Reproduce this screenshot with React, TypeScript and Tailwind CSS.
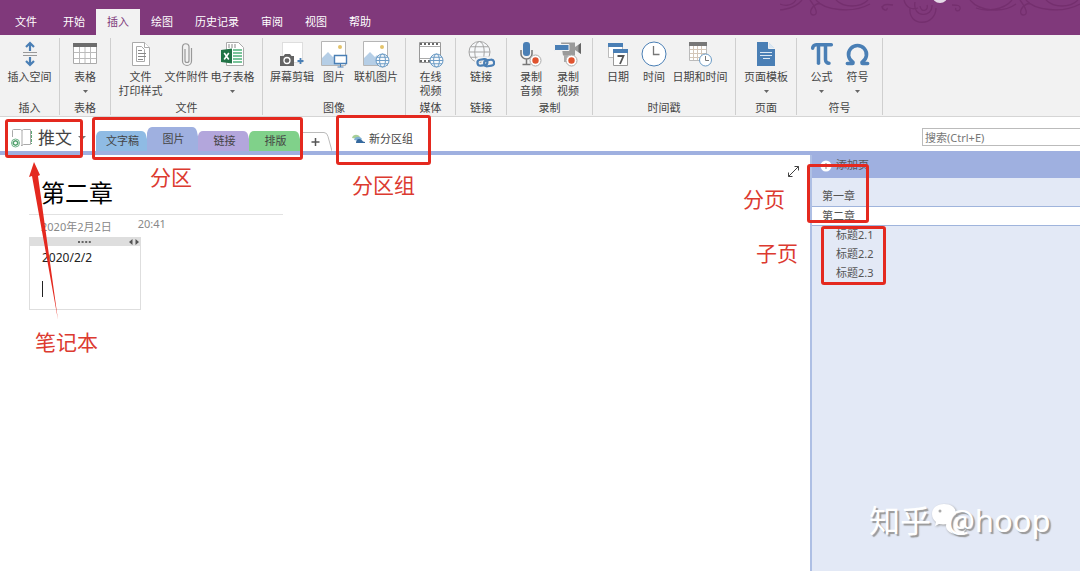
import type { ReactNode } from 'react';
import { Omega, Pi } from 'lucide-react';

const BLUE = '#4a7fb5';

interface ToolProps {
  icon: ReactNode;
  lines: string[];
  menu?: boolean;
  width: string;
}

function Tool({ icon, lines, menu, width }: ToolProps) {
  return (
    <button type="button" className={`flex flex-col items-center shrink-0 whitespace-nowrap ${width}`}>
      <span className="flex h-[32px] items-center justify-center">{icon}</span>
      {lines.map(l => <span key={l} className="h-[14px] leading-[14px]">{l}</span>)}
      {menu && <Caret />}
    </button>
  );
}

function Caret() {
  return (
    <span className="flex h-[14px] items-center justify-center">
      <svg width="5" height="3" viewBox="0 0 5 3"><path d="M0 0h5L2.5 3z" fill="#666" /></svg>
    </span>
  );
}

function Group({ name, width, children }: { name: string; width: string; children: ReactNode }) {
  return (
    <section aria-label={name} className={`flex shrink-0 flex-col justify-between border-r border-[#cfcfcf] ${width}`}>
      <div className="flex justify-center">{children}</div>
      <div className="h-[14px] text-center leading-[14px]">{name}</div>
    </section>
  );
}

function Globe({ x, y, r, color }: { x: number; y: number; r: number; color: string }) {
  return (
    <g fill="#f7f9fb" stroke={color} strokeWidth="1">
      <circle cx={x} cy={y} r={r} />
      <ellipse cx={x} cy={y} rx={r * 0.45} ry={r} fill="none" />
      <path d={`M${x - r} ${y}h${r * 2}M${x - r * 0.85} ${y - r * 0.5}h${r * 1.7}M${x - r * 0.85} ${y + r * 0.5}h${r * 1.7}`} fill="none" />
    </g>
  );
}

function Photo() {
  return (
    <g>
      <path d="M1.5 1.5h24v24h-24z" fill="#fff" stroke="#b5b5b5" />
      <path d="M2 25v-7l6-6 5 5 2-2 5 5v5z" fill="#b5cee6" />
      <circle cx="20" cy="7" r="2" fill="#e3c36b" />
    </g>
  );
}

function Rec({ x, y }: { x: number; y: number }) {
  return (
    <g>
      <circle cx={x} cy={y} r="5.5" fill="#fff" stroke="#aaa" />
      <circle cx={x} cy={y} r="3.2" fill="#e0532f" />
    </g>
  );
}

const icons = {
  space: (
    <svg width="16" height="26" viewBox="0 0 16 26" fill="none">
      <path d="M1 11.5h14M1 14.5h14" stroke="#999" />
      <path d="M8 10V2.5M4 6l4-4 4 4M8 16v7.5M4 20l4 4 4-4" stroke={BLUE} strokeWidth="2.2" />
    </svg>
  ),
  table: (
    <svg width="24" height="24" viewBox="0 0 24 24">
      <path d="M.5 2.5h23v19H.5z" fill="#fff" stroke="#aaa" />
      <path d="M0 1h24v4H0z" fill="#6d6d6d" />
      <path d="M1 10.5h22M1 16.5h22M6.5 5v16M12 5v16M17.5 5v16" stroke="#bbb" />
    </svg>
  ),
  printout: (
    <svg width="20" height="26" viewBox="0 0 20 26" fill="#fff" stroke="#aaa">
      <path d="M1.5 1.5h12l5 5v18h-17z" />
      <path d="M13.5 1.5v5h5" />
      <path d="M5.5 5.5h5l3 3v12h-8z" />
      <path d="M7 9.5h4M7 12.5h8M7 15.5h8M7 18.5h5" stroke="#888" />
    </svg>
  ),
  clip: (
    <svg width="12" height="26" viewBox="0 0 12 26" fill="none" stroke="#999" strokeWidth="1.2">
      <path d="M4 8v11.5a2 2 0 0 0 4 0V5.5a3.3 3.3 0 0 0-6.500 0V20a4.500 4.500 0 0 0 9 0V7" />
    </svg>
  ),
  sheet: (
    <svg width="24" height="26" viewBox="0 0 24 26">
      <path d="M5.5 1.5h12l5 5v18h-17z" fill="#fff" stroke="#aaa" />
      <path d="M7 4h9M7 6h9" stroke="#888" strokeDasharray="2 1" />
      <path d="M12 9h9M12 12h9M12 15h9M12 18h9M12 21h9" stroke="#79c49a" strokeWidth="2" />
      <path d="M0 9l11-1.5v15L0 21z" fill="#217346" />
      <path d="M3.2 12l4.600 6.5M7.800 12l-4.600 6.5" stroke="#fff" strokeWidth="1.6" />
    </svg>
  ),
  capture: (
    <svg width="26" height="26" viewBox="0 0 26 26">
      <path d="M3.5 1.5h20v20h-20z" fill="#fff" stroke="#c4c4c4" strokeDasharray="1 1" />
      <path d="M1 15h3.5l1.5-2h5l1.5 2H15v10H1z" fill="#636363" />
      <circle cx="8" cy="19.5" r="3" fill="#636363" stroke="#fff" strokeWidth="1.3" />
      <path d="M21.5 17v6M18.5 20h6" stroke={BLUE} strokeWidth="1.8" />
    </svg>
  ),
  picture: (
    <svg width="28" height="28" viewBox="0 0 28 28">
      <Photo />
      <path d="M14.5 15.5h12v8h-12z" fill="#fff" stroke={BLUE} strokeWidth="1.4" />
      <path d="M20.5 24v3M17.5 27h6" stroke={BLUE} />
    </svg>
  ),
  online: <svg width="28" height="28" viewBox="0 0 28 28"><Photo /><Globe x={20.5} y={20.5} r={6.5} color="#6c9cc6" /></svg>,
  video: (
    <svg width="26" height="28" viewBox="0 0 26 28">
      <path d="M1.5 2.5h21v20h-21z" fill="#fff" stroke="#999" />
      <path d="M2 4h20M2 21h20" stroke="#666" strokeWidth="2" strokeDasharray="2 2" />
      <path d="M2 6.5h20M2 18.5h20" stroke="#aaa" />
      <Globe x={18.5} y={20.5} r={6.5} color="#6c9cc6" />
    </svg>
  ),
  link: (
    <svg width="28" height="28" viewBox="0 0 28 28">
      <Globe x={12.5} y={12} r={10.5} color="#a5a5a5" />
      <g fill="none" stroke="#f2f2f2" strokeWidth="5">
        <rect x="10" y="19" width="10" height="7" rx="3.5" /><rect x="17" y="19" width="9" height="7" rx="3.5" />
      </g>
      <g fill="none" stroke={BLUE} strokeWidth="2.2">
        <rect x="10.5" y="19.5" width="10" height="6" rx="3" transform="rotate(-8 15 23)" />
        <rect x="17" y="20" width="10" height="6" rx="3" transform="rotate(-8 22 22)" />
      </g>
    </svg>
  ),
  audio: (
    <svg width="22" height="28" viewBox="0 0 22 28">
      <rect x="3" y="2" width="7" height="14" rx="3" fill={BLUE} />
      <path d="M1 10v4a5.5 5 0 0 0 11 0v-4M6.5 19v5M2.5 24.5h8" fill="none" stroke="#777" strokeWidth="1.5" />
      <Rec x={15.5} y={20.5} />
    </svg>
  ),
  camera: (
    <svg width="28" height="28" viewBox="0 0 28 28">
      <path d="M7 2.5h14v13H9zM21 7l6-4v11l-6-4z" fill="#9a9a9a" />
      <path d="M24.5 5l2.5-2v11l-2.5-2z" fill="#666" />
      <path d="M.5 4.5h14.5v6H.5z" fill={BLUE} stroke="#f2f2f2" />
      <path d="M10 15h4v7h-4z" fill="#aaa" />
      <Rec x={17.5} y={20.5} />
    </svg>
  ),
  date: (
    <svg width="22" height="26" viewBox="0 0 22 26">
      <path d="M1.5 2.5h14v14h-14z" fill="#fff" stroke="#bbb" />
      <path d="M1 2h15v4H1z" fill={BLUE} />
      <path d="M6.5 8.5h14v16h-14z" fill="#fff" stroke="#999" />
      <path d="M6 8h15v4H6z" fill={BLUE} />
      <path d="M10.5 15h6l-3.5 8" fill="none" stroke="#555" strokeWidth="1.8" />
    </svg>
  ),
  time: (
    <svg width="26" height="26" viewBox="0 0 26 26" fill="none">
      <circle cx="13" cy="13" r="12" fill="#fff" stroke={BLUE} />
      <path d="M12.5 5v8.5h6" stroke="#777" strokeWidth="1.3" />
    </svg>
  ),
  datetime: (
    <svg width="26" height="28" viewBox="0 0 26 28" fill="none">
      <path d="M2.5 2.5h17v18h-17z" fill="#fff" stroke="#bbb" />
      <path d="M3 9.5h16M3 13.5h16M3 17.5h16M6.5 6v14M10.5 6v14M14.5 6v14" stroke="#d3c6b8" />
      <path d="M2 2h18v4H2z" fill="#777" />
      <circle cx="18.5" cy="20" r="6" fill="#fff" stroke="#6c9cc6" />
      <path d="M18.5 16v4.5h3.5" stroke="#777" />
    </svg>
  ),
  template: (
    <svg width="20" height="26" viewBox="0 0 20 26">
      <path d="M1 1h11l7 7v17H1z" fill={BLUE} />
      <path d="M12.5 1v6.5H19" fill="#dce8f3" stroke="#f2f2f2" />
      <path d="M4 11.5h12M4 14.5h12M7 17.5h7" stroke="#dce8f3" />
    </svg>
  ),
  pi: <Pi size={28} color={BLUE} strokeWidth={3} />,
  omega: <Omega size={27} color={BLUE} strokeWidth={3.2} />,
};

const menuTabs = ['开始', '插入', '绘图', '历史记录', '审阅', '视图', '帮助'];

const sections = [
  { name: '文字稿', fill: '#8fbbe4', box: 'h-5' },
  { name: '图片', fill: '#9fb0e0', box: 'h-6' },
  { name: '链接', fill: '#b3a6dc', box: 'h-5' },
  { name: '排版', fill: '#80d18a', box: 'h-5' },
];

const pages = [
  { name: '第一章', row: 'h-[19px] pl-[10px]' },
  { name: '第二章', row: 'h-[20px] pl-[10px] bg-white border-y border-[#9fb4dc]' },
  { name: '标题2.1', row: 'h-[19px] pl-[24px]' },
  { name: '标题2.2', row: 'h-[19px] pl-[24px]' },
  { name: '标题2.3', row: 'h-[19px] pl-[24px]' },
];

// callouts drawn over the window
const frames = [
  'left-[5px] top-[119px] w-[78px] h-[39px]',
  'left-[92px] top-[117px] w-[211px] h-[43px]',
  'left-[336px] top-[115px] w-[95px] h-[50px]',
  'left-[807px] top-[164px] w-[62px] h-[59px]',
  'left-[821px] top-[226px] w-[65px] h-[59px]',
];

const notes = [
  { text: '分区', at: 'left-[150px] top-[162px]' },
  { text: '分区组', at: 'left-[352px] top-[170px]' },
  { text: '分页', at: 'left-[743px] top-[184px]' },
  { text: '子页', at: 'left-[756px] top-[238px]' },
  { text: '笔记本', at: 'left-[35px] top-[327px]' },
];

function Swirls() {
  return (
    <svg className="absolute right-0 top-0" width="300" height="35" viewBox="0 0 300 35" fill="none" stroke="#742f6e" strokeWidth="1.3">
      {[0, 210].map(x => (
        <g key={x} transform={`translate(${x} 0)`}>
          <path d="M-14 8C-4 12 14 10 22 0M30 0c6 8 9 15 3 15-5-1-2-10 7-12M36 0c8 10 36 14 54 4M56 0c8 8 24 8 32 0" />
        </g>
      ))}
      <path d="M-8 0c12 8 20 6 24 0M103 9c-2-5 4-5 10-4M102 6c0 5 6 5 5 2M172 5c5 0 9 0 8 4-1 3-6 2-4-1M190 0c10 12 34 13 46 4M124 0c2 8 8 10 14 8M130 8c-2 20 26 18 26 0M135 2c-3 16 18 16 17 3M140 6c1 7 9 5 7-1" />
      <circle cx="160" cy="-5" r="8" fill="#e6dbe8" stroke="none" />
    </svg>
  );
}

export default function App() {
  return (
    <div className="relative flex min-h-screen flex-col overflow-hidden bg-white text-[11px] text-[#444] font-['Noto_Sans','Noto_Sans_CJK_SC',sans-serif]">
      <header className="relative flex h-[35px] items-end bg-[#80397b] text-white">
        <Swirls />
        <button type="button" className="h-[26px] w-[52px]">文件</button>
        {menuTabs.map(t => (
          <button key={t} type="button" className={`h-[26px] px-[11px] ${t === '插入' ? 'bg-[#f2f2f2] text-[#80397b]' : ''}`}>{t}</button>
        ))}
      </header>

      <div className="flex h-[82px] border-b border-[#d5d5d5] bg-[#f2f2f2] pb-px pt-[3px]">
        <Group name="插入" width="w-[60px]">
          <Tool icon={icons.space} lines={['插入空间']} width="w-[60px]" />
        </Group>
        <Group name="表格" width="w-[51px]">
          <Tool icon={icons.table} lines={['表格']} menu width="w-[48px]" />
        </Group>
        <Group name="文件" width="w-[152px]">
          <Tool icon={icons.printout} lines={['文件', '打印样式']} width="w-[46px]" />
          <Tool icon={icons.clip} lines={['文件附件']} width="w-[46px]" />
          <Tool icon={icons.sheet} lines={['电子表格']} menu width="w-[46px]" />
        </Group>
        <Group name="图像" width="w-[143px]">
          <Tool icon={icons.capture} lines={['屏幕剪辑']} width="w-[46px]" />
          <Tool icon={icons.picture} lines={['图片']} width="w-[38px]" />
          <Tool icon={icons.online} lines={['联机图片']} width="w-[46px]" />
        </Group>
        <Group name="媒体" width="w-[50px]">
          <Tool icon={icons.video} lines={['在线', '视频']} width="w-[46px]" />
        </Group>
        <Group name="链接" width="w-[51px]">
          <Tool icon={icons.link} lines={['链接']} width="w-[46px]" />
        </Group>
        <Group name="录制" width="w-[86px]">
          <Tool icon={icons.audio} lines={['录制', '音频']} width="w-[37px]" />
          <Tool icon={icons.camera} lines={['录制', '视频']} width="w-[37px]" />
        </Group>
        <Group name="时间戳" width="w-[143px]">
          <Tool icon={icons.date} lines={['日期']} width="w-[36px]" />
          <Tool icon={icons.time} lines={['时间']} width="w-[36px]" />
          <Tool icon={icons.datetime} lines={['日期和时间']} width="w-[56px]" />
        </Group>
        <Group name="页面" width="w-[61px]">
          <Tool icon={icons.template} lines={['页面模板']} menu width="w-[56px]" />
        </Group>
        <Group name="符号" width="w-[86px]">
          <Tool icon={icons.pi} lines={['公式']} menu width="w-[36px]" />
          <Tool icon={icons.omega} lines={['符号']} menu width="w-[36px]" />
        </Group>
      </div>

      <div className="flex h-[38px] items-end border-b-4 border-[#9fb0e0]">
        <button type="button" className="flex h-[26px] w-[96px] items-center gap-[5px] pl-[11px] text-[17px]">
          <svg width="22" height="22" viewBox="0 0 22 22" fill="none">
            <path d="M1.500 10V3.500q0-1 1-1h7l1.500 1 1.500-1h7v15h-7l-1.500 1H10M11 3.500v15" stroke="#aaa" />
            <path d="M20.500 4v13" stroke="#5fa777" strokeDasharray="3 1" />
            <circle cx="4.500" cy="16" r="4" fill="#fff" stroke="#6fb389" />
            <path d="M2 16c1-3 4-3 5 0M7 16c-1 3-4 3-5 0" stroke="#4f9f6b" strokeWidth="1.500" />
          </svg>
          推文
          <svg className="ml-px" width="8" height="4" viewBox="0 0 8 4"><path d="M0 0h8L4 4z" fill="#777" /></svg>
        </button>
        {sections.map(s => (
          <button key={s.name} type="button" className={`relative w-[51px] ${s.box}`}>
            <svg className="absolute inset-0 h-full w-full overflow-visible" viewBox="0 0 51 20" preserveAspectRatio="none">
              <path d="M0 20V5Q1 0 5 0h40q4 0 5 4l4 16z" fill={s.fill} />
            </svg>
            <span className="relative pl-[2px]">{s.name}</span>
          </button>
        ))}
        <button type="button" aria-label="新建分区" className="relative flex h-[19px] w-[32px] items-center justify-center">
          <svg width="32" height="19" viewBox="0 0 32 19" fill="none">
            <path d="M1 .5h23q3 0 4 4l4 14.500" stroke="#bbb" />
            <path d="M15.500 6v8M11.500 10h8" stroke="#555" strokeWidth="1.500" />
          </svg>
        </button>
        <button type="button" className="ml-5 flex h-[24px] items-center gap-1">
          <svg width="13" height="10" viewBox="0 0 13 10">
            <path d="M0 4c1-4 6-4 8-1L6 5z" fill="#a8cf97" />
            <path d="M2 6c1-4 6-4 8-1L8 7z" fill="#7fb0d3" />
            <path d="M4 9c0-5 5-5 7-1.500l2 .5v1z" fill="#35699e" />
          </svg>
          新分区组
        </button>
        <input aria-label="搜索" placeholder="搜索(Ctrl+E)" className="mb-[5px] ml-auto h-[18px] w-[158px] border border-r-0 border-[#bbb] pl-[2px] text-[11px] outline-none placeholder:text-[#777]" />
      </div>

      <div className="flex flex-1">
        <main className="flex flex-1 items-start justify-between pl-[29px] pr-[10px]">
          <div className="w-[254px]">
            <h1 className="h-[60px] border-b border-[#e2e2e2] pl-[12px] pt-[20px] text-[24px] leading-9 text-black">第二章</h1>
            <div className="flex h-[22px] items-start gap-[26px] pl-[12px] leading-[18px] text-[#888]">
              <span className="pt-[3px]">2020年2月2日</span>
              <span>20:41</span>
            </div>
            <div className="h-[73px] w-[112px] border border-[#dedede]">
              <div className="flex h-[8px] items-center justify-between bg-[#dedede] pl-[48px] pr-[1px]">
                <svg width="13" height="2" viewBox="0 0 13 2"><path d="M0 1h13" stroke="#666" strokeWidth="2" strokeDasharray="2 1.6" /></svg>
                <svg width="10" height="6" viewBox="0 0 10 6"><path d="M3.5 0v6L0 3zM6.5 0v6L10 3z" fill="#555" /></svg>
              </div>
              <div className="pl-[12px] pt-[3px] text-[12px] leading-[18px] text-[#222]">2020/2/2</div>
              <div className="ml-[12px] mt-[14px] h-[16px] w-px bg-[#222]" />
            </div>
          </div>
          <button type="button" aria-label="展开" className="mt-[10px]">
            <svg width="13" height="13" viewBox="0 0 13 13" fill="none" stroke="#444"><path d="M1.5 11.5l10-10M7.5 1.5h4v4M1.5 7.5v4h4" /></svg>
          </button>
        </main>

        <aside className="w-[270px] border-l-2 border-[#aebfe4] bg-[#e3e9f6] text-[#555]">
          <button type="button" className="flex h-[23px] w-full items-center gap-[4px] bg-[#9fb0e0] pb-[2px] pl-[8px]">
            <svg width="12" height="12" viewBox="0 0 12 12"><circle cx="6" cy="6" r="5.5" fill="#fff" /><path d="M6 3v6M3 6h6" stroke="#888" /></svg>
            添加页
          </button>
          <nav className="flex flex-col pt-[9px]">
            {pages.map(p => (
              <a key={p.name} href="#" className={`leading-[18px] ${p.row}`}>{p.name}</a>
            ))}
          </nav>
        </aside>
      </div>

      {frames.map(f => <div key={f} className={`pointer-events-none absolute rounded-[3px] border-3 border-[#e4291f] ${f}`} />)}
      {notes.map(n => <div key={n.text} className={`absolute text-[21px] leading-[30px] text-[#dc3a30] ${n.at}`}>{n.text}</div>)}
      <svg className="pointer-events-none absolute left-[28px] top-[161px]" width="34" height="160" viewBox="0 0 34 160">
        <path d="M6 1l6 13-2 1 20 144L4 15l-3 1z" fill="#e4291f" />
      </svg>

      <div className="absolute left-[869px] top-[498px] flex items-center text-[31px] leading-[44px] text-white [text-shadow:2px_2px_1px_#999]">
        知乎
        <svg className="-mr-[22px] drop-shadow-[1px_1px_1px_#999]" width="38" height="34" viewBox="0 0 38 34" fill="#fff">
          <path d="M13 1C6 1 1 5 1 11c0 4 2 6 4 8l-1 4 4-2c10 2 17-3 17-10S20 1 13 1z" />
          <path d="M26 14c-6 0-11 4-11 9s6 9 14 8l5 2-1-4c6-6 3-15-7-15z" />
          <circle cx="9" cy="8" r="1.5" fill="#aaa" />
        </svg>
        <span className="relative">@hoop</span>
      </div>
    </div>
  );
}
